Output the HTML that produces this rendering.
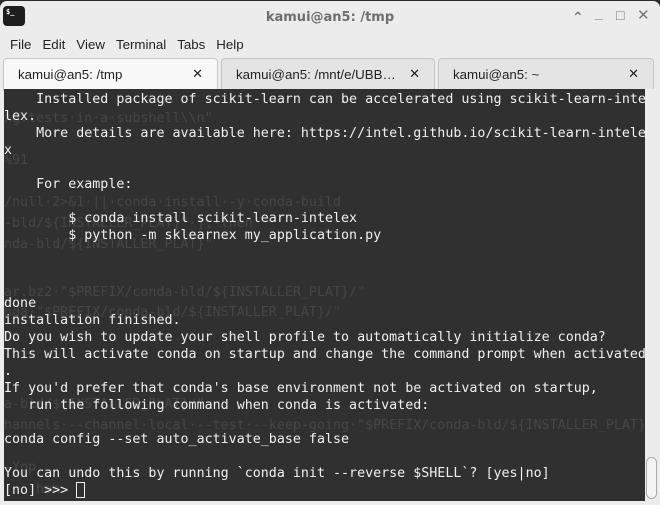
<!DOCTYPE html>
<html><head><meta charset="utf-8"><style>
*{margin:0;padding:0;box-sizing:border-box}
body{width:660px;height:505px;background:#2b2b2b;overflow:hidden;position:relative;font-family:"Liberation Sans","DejaVu Sans",sans-serif}
.win{position:absolute;left:0;top:1px;width:660px;height:504px;background:#ececec;border-radius:7px 7px 0 0;overflow:hidden}
.icon{position:absolute;left:3px;top:5px;width:22px;height:20px;background:#1e1e1e;border-radius:4px;color:#fff;font:bold 7px "DejaVu Sans Mono",monospace;padding:2px 0 0 3px}
.title{position:absolute;left:0;width:660px;top:9px;text-align:center;font-weight:700;font-size:14px;color:#6e6e6e;font-family:"DejaVu Sans",sans-serif;font-size:13px}
.ctl{position:absolute;top:6px;font-size:14px;color:#777;font-weight:bold}
.menu{position:absolute;top:36px;left:10px;font-size:13.3px;color:#222}
.menu span{margin-right:11px}
.tab{position:absolute;top:57px;height:32px;border:1px solid #c6c6c6;border-bottom:none;border-radius:4px 4px 0 0;background:#e4e4e4;font-size:13.3px;color:#222}
.tab .t{position:absolute;left:14px;top:8px}
.tab .x{position:absolute;right:14px;top:8px;font-size:13px;font-weight:bold;font-family:"DejaVu Sans",sans-serif}
.term{position:absolute;left:4px;top:88px;width:641px;height:412px;background:#303030;overflow:hidden}
pre{position:absolute;left:0;top:1.5px;font:13.33px/17px "DejaVu Sans Mono",monospace;color:#f0f0f0;white-space:pre}
.g{position:absolute;left:0;font:13.33px/17px "DejaVu Sans Mono",monospace;color:#464646;white-space:pre}
.sb{position:absolute;left:645px;top:88px;width:15px;height:412px;background:#ececec}
.thumb{position:absolute;left:646px;top:456px;width:11px;height:42px;border:1px solid #aaa;border-radius:6px;background:#f4f4f4}
.cur{display:inline-block;width:9px;height:16px;border:1px solid #f0f0f0;vertical-align:-4px}
</style></head><body>
<div class="win">
<div class="icon">$_</div>
<div class="title">kamui@an5: /tmp</div>
<div class="ctl" style="left:572px;top:8px">&#8963;</div>
<div class="ctl" style="left:595px;top:4px">_</div>
<div class="ctl" style="left:616px;top:6px">&#9633;</div>
<div class="ctl" style="left:637px;top:5px;font-size:15px">&#10005;</div>
<div class="menu"><span>File</span><span>Edit</span><span>View</span><span>Terminal</span><span>Tabs</span><span>Help</span></div>
<div class="tab" style="left:3px;width:215px;background:#f8f8f8;height:33px"><span class="t">kamui@an5: /tmp</span><span class="x">&#10005;</span></div>
<div class="tab" style="left:221px;width:214px"><span class="t">kamui@an5: /mnt/e/UBB…</span><span class="x">&#10005;</span></div>
<div class="tab" style="left:438px;width:216px"><span class="t">kamui@an5: ~</span><span class="x">&#10005;</span></div>
<div class="term">
<div class="g" style="top:21px">kg.tests·in·a·subshell\\n"</div>
<div class="g" style="top:63px">%91</div>
<div class="g" style="top:105px">/null·2&gt;&amp;1·||·conda·install·-y·conda-build</div>
<div class="g" style="top:126px">-bld/${INSTALLER_PLAT}"·];·then</div>
<div class="g" style="top:147px">nda-bld/${INSTALLER_PLAT}"</div>
<div class="g" style="top:195px">ar.bz2·"$PREFIX/conda-bld/${INSTALLER_PLAT}/"</div>
<div class="g" style="top:215px">nda·"$PREFIX/conda-bld/${INSTALLER_PLAT}/"</div>
<div class="g" style="top:307px">a-bld/${INSTALLER_PLAT}/"</div>
<div class="g" style="top:328px">hannels·--channel·local·--test·--keep-going·"$PREFIX/conda-bld/${INSTALLER_PLAT}/</div>
<div class="g" style="top:370px">-Yop</div>
<div class="g" style="top:392px">    hen</div>
<pre>    Installed package of scikit-learn can be accelerated using scikit-learn-inte
lex.
    More details are available here: https://intel.github.io/scikit-learn-intele
x

    For example:

        $ conda install scikit-learn-intelex
        $ python -m sklearnex my_application.py



done
installation finished.
Do you wish to update your shell profile to automatically initialize conda?
This will activate conda on startup and change the command prompt when activated
.
If you'd prefer that conda's base environment not be activated on startup,
   run the following command when conda is activated:

conda config --set auto_activate_base false

You can undo this by running `conda init --reverse $SHELL`? [yes|no]
[no] &gt;&gt;&gt; <span class="cur"></span></pre>
</div>
<div class="sb"></div><div class="thumb"></div>
</div>
</body></html>
